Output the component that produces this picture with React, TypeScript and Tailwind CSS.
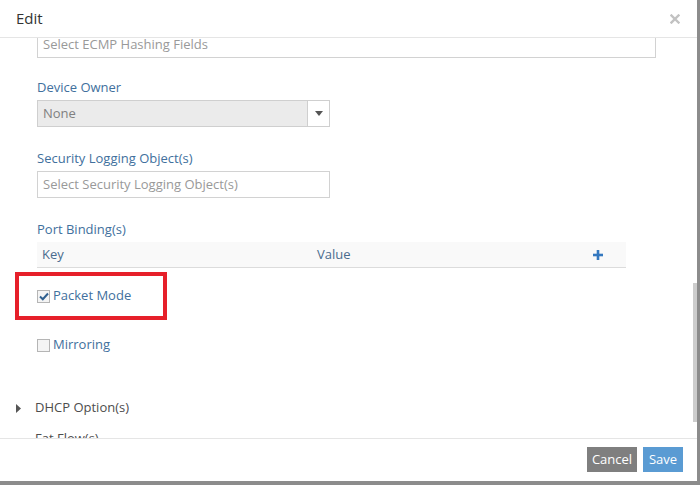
import React from 'react';

const font = { fontFamily: '"Open Sans", "Noto Sans", sans-serif' };

const CloseIcon = () => (
  <svg width="10" height="10" viewBox="0 0 10 10">
    <path d="M1.5 1.5 L8.5 8.5 M8.5 1.5 L1.5 8.5" stroke="#c2c2c2" strokeWidth="2.4" strokeLinecap="square" />
  </svg>
);

const CaretDown = () => (
  <svg width="8" height="5" viewBox="0 0 8 5">
    <path d="M0 0 H8 L4 5 Z" fill="#555" />
  </svg>
);

const CaretRight = () => (
  <svg width="5" height="9" viewBox="0 0 5 9">
    <path d="M0 0 L5 4.5 L0 9 Z" fill="#555" />
  </svg>
);

const PlusIcon = () => (
  <svg width="10" height="10" viewBox="0 0 10 10">
    <rect x="3.7" y="0" width="2.6" height="10" fill="#3478bf" />
    <rect x="0" y="3.7" width="10" height="2.6" fill="#3478bf" />
  </svg>
);

const Checkbox = ({ checked }: { checked?: boolean }) => (
  <span className="flex h-[13px] w-[13px] shrink-0 items-center justify-center border border-[#b5b5b5] bg-[#f4f4f4]">
    {checked && (
      <svg width="10" height="9" viewBox="0 0 10 9">
        <path d="M1 4.5 L3.8 7.2 L9 1.5" fill="none" stroke="#2f5f8f" strokeWidth="2" />
      </svg>
    )}
  </span>
);

export default function App() {
  return (
    <div className="h-[485px] w-[700px] overflow-hidden bg-[#8c8c8c]" style={font}>
      <div className="flex h-[481px] w-[697px] flex-col bg-white">
        {/* Header */}
        <div className="flex h-[38px] shrink-0 items-center justify-between border-b border-[#e5e5e5] pl-[16px] pr-[17px]">
          <span className="text-[15px] text-[#333]">Edit</span>
          <CloseIcon />
        </div>

        {/* Scrolling body */}
        <div className="relative flex-1 overflow-hidden">
          <div className="-mt-[7px] px-[37px] text-[13px]">
            <div className="flex h-[27px] w-[619px] items-center border border-[#d2d2d2] px-[5px] text-[#999]">
              Select ECMP Hashing Fields
            </div>

            <div className="mt-[20px] h-[18px] leading-[18px] text-[#41709d]">Device Owner</div>
            <div className="mt-[4px] flex h-[27px] w-[293px] border border-[#cfcfcf]">
              <div className="flex flex-1 items-center bg-[#ebebeb] px-[5px] text-[#808080]">None</div>
              <div className="flex w-[22px] items-center justify-center border-l border-[#cfcfcf] bg-white">
                <CaretDown />
              </div>
            </div>

            <div className="mt-[22px] h-[18px] leading-[18px] text-[#41709d]">Security Logging Object(s)</div>
            <div className="mt-[4px] flex h-[27px] w-[293px] items-center border border-[#d2d2d2] px-[5px] text-[#999]">
              Select Security Logging Object(s)
            </div>

            <div className="mt-[22px] h-[18px] leading-[18px] text-[#41709d]">Port Binding(s)</div>
            <div className="mt-[4px] flex h-[26px] w-[589px] items-center border-b border-[#dcdcdc] bg-[#f9f9f9] text-[#4a6c8e]">
              <span className="w-[280px] pl-[5px]">Key</span>
              <span className="flex-1">Value</span>
              <span className="mr-[23px]">
                <PlusIcon />
              </span>
            </div>

            {/* Highlighted checkbox */}
            <div className="-ml-[22px] mt-[4px] flex h-[48px] w-[152px] items-center border-[4px] border-[#e6202a] pl-[18px]">
              <Checkbox checked />
              <span className="ml-[3px] text-[#41709d]">Packet Mode</span>
            </div>

            <div className="mt-[16px] flex h-[18px] items-center">
              <Checkbox />
              <span className="ml-[3px] text-[#41709d]">Mirroring</span>
            </div>

            <div className="-ml-[22px] mt-[45px] flex h-[18px] items-center text-[#4d4d4d]">
              <span className="ml-[1px] mr-[14px]">
                <CaretRight />
              </span>
              DHCP Option(s)
            </div>
            <div className="-ml-[2px] mt-[12px] h-[18px] leading-[18px] text-[#4d4d4d]">Fat Flow(s)</div>
          </div>

          {/* scrollbar thumb */}
          <div className="absolute right-0 top-[245px] h-[139px] w-[4px] bg-[#cdcdcd]" />
        </div>

        {/* Footer */}
        <div className="flex h-[43px] shrink-0 items-start justify-end gap-[6px] border-t border-[#e5e5e5] pr-[14px] pt-[8px]">
          <button className="h-[25px] w-[50px] bg-[#7f7f7f] text-[13px] text-white">Cancel</button>
          <button className="h-[25px] w-[40px] bg-[#5a9bd3] text-[13px] text-white">Save</button>
        </div>
      </div>
    </div>
  );
}
